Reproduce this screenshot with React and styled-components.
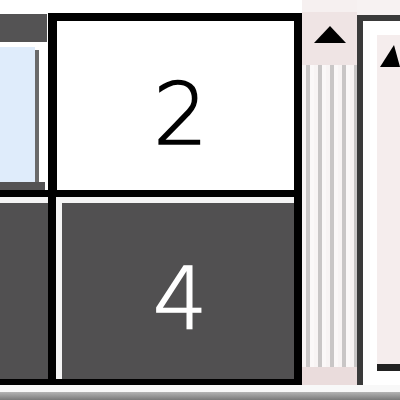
import React from 'react';
import styled, { createGlobalStyle } from 'styled-components';

const Global = createGlobalStyle`
html,body{margin:0;padding:0;background:#fff;}
`;

const Screen = styled.div`
width:400px;
height:400px;
overflow:hidden;
display:grid;
grid-template-rows:385px 7px 8px;
background:#fff;`;

const Main = styled.div`
display:flex;`;

const Table = styled.div`
width:302px;
display:grid;
grid-template-columns:48px 254px;
grid-template-rows:197px 188px;`;

const SelCell = styled.div`
background:#fff;
padding:14px 0 0 0;
border-bottom:7px solid #000;
display:flex;
flex-direction:column;`;

const Band = styled.div`
height:${p => p.h}px;
margin-right:${p => p.mr}px;
background:#545354;`;

const Gap = styled.div`
height:5px;`;

const BlueArea = styled.div`
flex:1;
display:flex;
margin-right:6px;`;

const Blue = styled.div`
width:35px;
background:#dfecfb;`;

const BlueEdge = styled.div`
width:4px;
margin-top:3px;
background:#6a6a6a;`;

const TopWrap = styled.div`
padding-top:13px;
background:#fff;
display:flex;`;

const LightCell = styled.div`
flex:1;
border-style:solid;
border-color:#000;
border-width:8px 8px 7px 9px;
background:#fff;
display:flex;
align-items:center;
justify-content:center;
padding:16px 0 0 10px;`;

const Digit = styled.span`
font-family:"DejaVu Sans", "Liberation Sans", sans-serif;
font-weight:200;
font-size:86px;
line-height:1;
color:${p => p.dark ? '#fff' : '#000'};
-webkit-text-stroke:1.6px ${p => p.dark ? '#fff' : '#000'};`;

const DarkCell = styled.div`
background:#515051;
border-top:6px solid #f4f4f4;
border-bottom:6px solid #000;`;

const DarkFrame = styled.div`
border-left:8px solid #000;
border-right:8px solid #000;
border-bottom:6px solid #000;
display:flex;`;

const DarkInner = styled.div`
flex:1;
background:#515051;
border-top:6px solid #f4f4f4;
border-left:6px solid #f4f4f4;
display:flex;
align-items:center;
justify-content:center;
padding:16px 0 0 4px;`;

const Scroll = styled.div`
width:55px;
display:flex;
flex-direction:column;
background:#f6f0f0;
padding-top:12px;`;

const ArrowBtn = styled.div`
height:53px;
background:#efe4e4;
display:flex;
justify-content:center;
padding-top:14px;
box-sizing:border-box;`;

const Up = styled.div`
width:0;
height:0;
border-left:16px solid transparent;
border-right:16px solid transparent;
border-bottom:17px solid #000;`;

const Track = styled.div`
flex:1;
background:repeating-linear-gradient(to right,#f8f4f4 0 4px,#c9c6c6 4px 8px,#fbf8f8 8px 12px);`;

const Foot = styled.div`
height:18px;
background:#eadcdc;`;

const Side = styled.div`
flex:1;
padding-top:15px;
background:#f7f2f2;
display:flex;`;

const SideBox = styled.div`
flex:1;
border-left:6px solid #3a3a3a;
border-top:6px solid #3a3a3a;
background:#fff;
display:flex;
padding:14px 0 14px 14px;`;

const SideBar = styled.div`
flex:1;
background:#f5eded;
border-bottom:7px solid #222;
padding-top:10px;
display:flex;
justify-content:flex-end;`;

const SideUp = styled.div`
width:0;
height:0;
border-left:14px solid transparent;
border-right:6px solid transparent;
border-bottom:22px solid #000;`;

const WhiteLine = styled.div`
background:#f8f8f8;`;

const GrayLine = styled.div`
background:linear-gradient(#b4b4b4,#7a7a7a);`;

const App = () => {
  return <Screen>
    <Global/>
    <Main>
      <Table>
        <SelCell>
          <Band h={28} mr={1}/>
          <Gap/>
          <BlueArea>
            <Blue/>
            <BlueEdge/>
          </BlueArea>
          <Band h={8} mr={3}/>
        </SelCell>
        <TopWrap>
          <LightCell>
            <Digit>2</Digit>
          </LightCell>
        </TopWrap>
        <DarkCell/>
        <DarkFrame>
          <DarkInner>
            <Digit dark>4</Digit>
          </DarkInner>
        </DarkFrame>
      </Table>
      <Scroll>
        <ArrowBtn>
          <Up/>
        </ArrowBtn>
        <Track/>
        <Foot/>
      </Scroll>
      <Side>
        <SideBox>
          <SideBar>
            <SideUp/>
          </SideBar>
        </SideBox>
      </Side>
    </Main>
    <WhiteLine/>
    <GrayLine/>
  </Screen>;
};

export default App;
